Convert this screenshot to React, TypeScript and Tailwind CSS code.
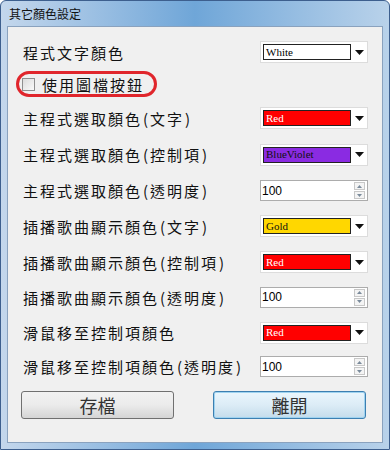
import { ReactNode } from 'react'

const kai = { fontFamily: '"Noto Sans CJK TC", "Noto Sans CJK SC", sans-serif' }
const ming = { fontFamily: '"Liberation Serif", "Noto Sans CJK TC", serif' }

function Arrow() {
  return (
    <svg width="9" height="5" viewBox="0 0 9 5" className="mx-auto">
      <path d="M0 0 H9 L4.5 5 Z" fill="#111" />
    </svg>
  )
}

function Combo({ name, bg, fg }: { name: string; bg: string; fg: string }) {
  return (
    <div className="flex h-[22px] w-[108px] items-center border border-[#dcdcdc] bg-white pl-[2px]">
      <div
        className="flex h-[16px] w-[88px] items-center border border-[#222] px-[2px] text-[11px] leading-none"
        style={{ ...ming, background: bg, color: fg }}
      >
        {name}
      </div>
      <div className="flex-1">
        <Arrow />
      </div>
    </div>
  )
}

function Spin() {
  return (
    <div className="flex h-[21px] w-[108px] items-center border border-[#acacac] bg-white">
      <span className="flex-1 pl-[1px] text-[12px] leading-none text-black" style={{ fontFamily: '"Liberation Sans", sans-serif' }}>
        100
      </span>
      <div className="mr-[2px] flex h-[17px] w-[11px] flex-col gap-[1px]">
        <div className="flex flex-1 items-center justify-center border border-[#c8c8c8] bg-[#f4f4f4]">
          <svg width="5" height="3" viewBox="0 0 5 3"><path d="M0 3 L2.5 0 L5 3 Z" fill="#7a8a9a" /></svg>
        </div>
        <div className="flex flex-1 items-center justify-center border border-[#c8c8c8] bg-[#f4f4f4]">
          <svg width="5" height="3" viewBox="0 0 5 3"><path d="M0 0 L5 0 L2.5 3 Z" fill="#7a8a9a" /></svg>
        </div>
      </div>
    </div>
  )
}

function Label({ text }: { text: string }) {
  const m = text.match(/^(.*?)\((.*)\)$/)
  return (
    <span className="text-[15px] leading-none tracking-[2px] text-[#111]" style={kai}>
      {m ? (
        <>
          {m[1]}
          <span className="ml-[1px]">(</span>
          {m[2]}
          <span className="ml-[1px]">)</span>
        </>
      ) : (
        text
      )}
    </span>
  )
}

function Row({ label, h, children }: { label: string; h: string; children?: ReactNode }) {
  return (
    <div className={`flex items-center justify-between pl-[15px] ${h}`}>
      <Label text={label} />
      {children}
    </div>
  )
}

export default function App() {
  return (
    <div className="h-[450px] w-[390px] rounded-t-[6px] border border-[#3d5f8e] bg-gradient-to-r from-[#c4d7ec] via-[#6fa6d8] to-[#b9d2ea] p-[6px] pt-0">
      <div className="flex h-[25px] items-center pl-[2px] text-[12px] text-[#111]" style={kai}>
        其它顏色設定
      </div>
      <div className="h-[417px] border border-[#8aa2be] bg-[#f0f0f0] pr-[14px] pt-[9px]">
        <Row label="程式文字顏色" h="h-[32px]">
          <Combo name="White" bg="#ffffff" fg="#000" />
        </Row>
        <div className="flex h-[32px] items-center pl-[8px]">
          <div className="flex h-[26px] w-[141px] items-center gap-[7px] rounded-[14px] border-[3px] border-[#e0262c] pl-[3px]">
            <div className="h-[13px] w-[13px] border border-[#8f8f8f] bg-gradient-to-br from-[#dcdcdc] to-[#fafafa]" />
            <span className="text-[15px] leading-none tracking-[2px] text-[#111]" style={kai}>
              使用圖檔按鈕
            </span>
          </div>
        </div>
        <Row label="主程式選取顏色(文字)" h="h-[36px]">
          <Combo name="Red" bg="#ff0000" fg="#fff" />
        </Row>
        <Row label="主程式選取顏色(控制項)" h="h-[37px]">
          <Combo name="BlueViolet" bg="#8a2be2" fg="#111" />
        </Row>
        <Row label="主程式選取顏色(透明度)" h="h-[35px]">
          <Spin />
        </Row>
        <Row label="插播歌曲顯示顏色(文字)" h="h-[36px]">
          <Combo name="Gold" bg="#ffd700" fg="#111" />
        </Row>
        <Row label="插播歌曲顯示顏色(控制項)" h="h-[36px]">
          <Combo name="Red" bg="#ff0000" fg="#fff" />
        </Row>
        <Row label="插播歌曲顯示顏色(透明度)" h="h-[34px]">
          <Spin />
        </Row>
        <Row label="滑鼠移至控制項顏色" h="h-[37px]">
          <Combo name="Red" bg="#ff0000" fg="#fff" />
        </Row>
        <Row label="滑鼠移至控制項顏色(透明度)" h="h-[31px]">
          <Spin />
        </Row>
        <div className="mt-[9px] flex justify-between pl-[13px] pr-[2px]">
          <button className="h-[28px] w-[153px] rounded-[3px] border border-[#707070] bg-gradient-to-b from-[#f2f2f2] via-[#ebebeb] to-[#d5d5d5] text-[18px] leading-none text-[#333]" style={kai}>
            存檔
          </button>
          <button className="h-[28px] w-[153px] rounded-[3px] border border-[#3c7fb1] bg-gradient-to-b from-[#eaf6fd] via-[#dcecf6] to-[#c4dceb] text-[18px] leading-none text-[#333] shadow-[inset_0_0_0_1px_#9fd3f0]" style={kai}>
            離開
          </button>
        </div>
      </div>
    </div>
  )
}
